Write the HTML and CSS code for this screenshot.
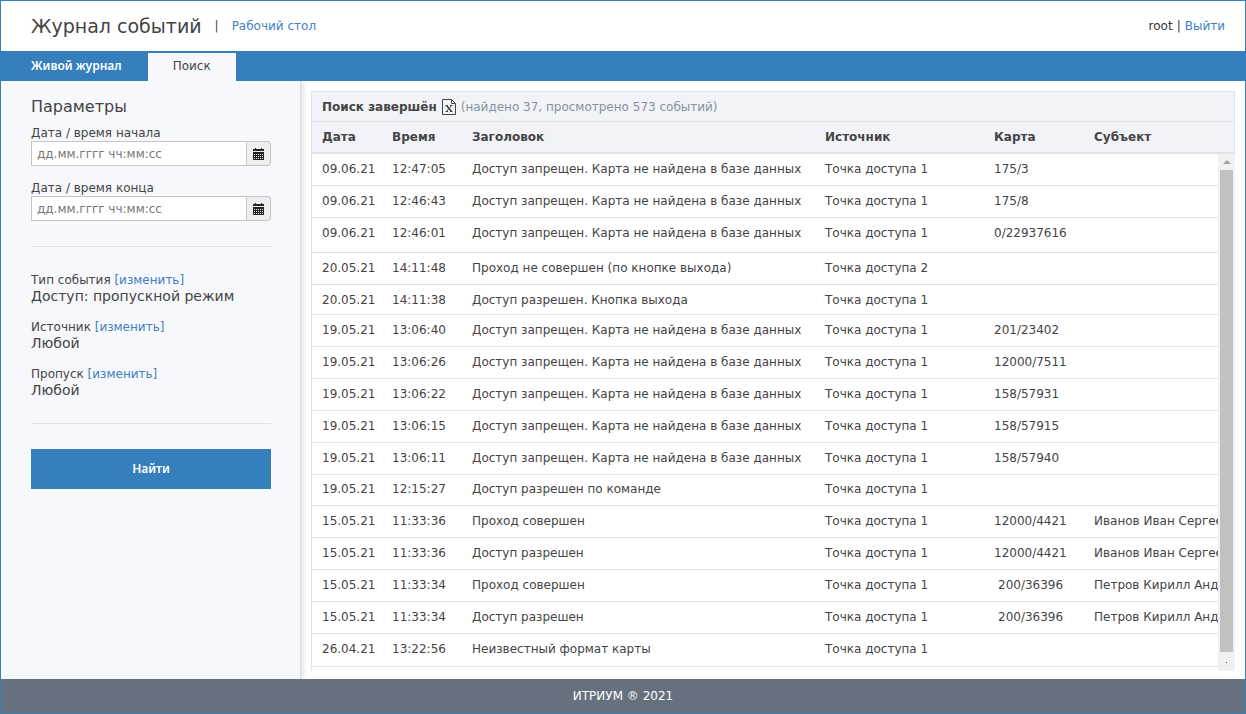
FILE: index.html
```html
<!DOCTYPE html>
<html lang="ru">
<head>
<meta charset="utf-8">
<title>Журнал событий</title>
<link rel="stylesheet" href="styles.css">
</head>
<body>
<div class="app">
  <header class="header">
    <h1 class="title">Журнал событий</h1>
    <span class="divider">|</span>
    <a class="link" href="#">Рабочий стол</a>
    <div class="user"><span>root</span><span>|</span><a class="link" href="#">Выйти</a></div>
  </header>
  <nav class="tabs">
    <a class="tab" href="#">Живой журнал</a>
    <a class="tab tab-active" href="#">Поиск</a>
  </nav>
  <div class="body">
    <aside class="sidebar">
      <h2 class="params">Параметры</h2>
      <div class="field">
        <label for="from">Дата / время начала</label>
        <div class="picker">
          <input id="from" type="text" placeholder="дд.мм.гггг чч:мм:сс">
          <button type="button" aria-label="Выбрать начало"><svg width="11" height="12" viewBox="0 0 11 12" shape-rendering="crispEdges"><path fill="#222" d="M0 1h2V0h1v1h5V0h1v1h2v2H0zM0 4h11v8H0z"/><path stroke="#eee" stroke-dasharray="1 1" d="M1 6.500h9M1 8.500h9M1 10.500h9"/></svg></button>
        </div>
      </div>
      <div class="field">
        <label for="to">Дата / время конца</label>
        <div class="picker">
          <input id="to" type="text" placeholder="дд.мм.гггг чч:мм:сс">
          <button type="button" aria-label="Выбрать конец"><svg width="11" height="12" viewBox="0 0 11 12" shape-rendering="crispEdges"><path fill="#222" d="M0 1h2V0h1v1h5V0h1v1h2v2H0zM0 4h11v8H0z"/><path stroke="#eee" stroke-dasharray="1 1" d="M1 6.500h9M1 8.500h9M1 10.500h9"/></svg></button>
        </div>
      </div>
      <div class="filters">
        <div class="filter"><div>Тип события <a class="link" href="#">[изменить]</a></div><div class="value">Доступ: пропускной режим</div></div>
        <div class="filter"><div>Источник <a class="link" href="#">[изменить]</a></div><div class="value">Любой</div></div>
        <div class="filter"><div>Пропуск <a class="link" href="#">[изменить]</a></div><div class="value">Любой</div></div>
      </div>
      <button class="find" type="button">Найти</button>
    </aside>
    <main class="results">
      <div class="status">
        <strong>Поиск завершён</strong>
        <svg width="14" height="16" viewBox="0 0 14 16" fill="none" stroke="#444" aria-label="Excel"><path d="M.5.500h9l4 4v11H.5z"/><path d="M9.500.500v4h4"/><path d="M3.500 6.500H6M8 6.500h2.500M3.500 12.500H6M8 12.500h2.500M9.500 6.500l-5 6"/><path stroke-width="1.500" d="M4.500 6.500l5 6"/></svg>
        <span class="muted">(найдено 37, просмотрено 573 событий)</span>
      </div>
      <div class="frame">
      <table class="events">
        <colgroup><col class="c-date"><col class="c-time"><col class="c-title"><col class="c-source"><col class="c-card"><col></colgroup>
        <thead><tr><th>Дата</th><th>Время</th><th>Заголовок</th><th>Источник</th><th>Карта</th><th>Субъект</th></tr></thead>
        <tbody>
          <tr><td>09.06.21</td><td>12:47:05</td><td>Доступ запрещен. Карта не найдена в базе данных</td><td>Точка доступа 1</td><td>175/3</td><td></td></tr>
          <tr><td>09.06.21</td><td>12:46:43</td><td>Доступ запрещен. Карта не найдена в базе данных</td><td>Точка доступа 1</td><td>175/8</td><td></td></tr>
          <tr class="tall"><td>09.06.21</td><td>12:46:01</td><td>Доступ запрещен. Карта не найдена в базе данных</td><td>Точка доступа 1</td><td>0/22937616</td><td></td></tr>
          <tr><td>20.05.21</td><td>14:11:48</td><td>Проход не совершен (по кнопке выхода)</td><td>Точка доступа 2</td><td></td><td></td></tr>
          <tr class="short"><td>20.05.21</td><td>14:11:38</td><td>Доступ разрешен. Кнопка выхода</td><td>Точка доступа 1</td><td></td><td></td></tr>
          <tr><td>19.05.21</td><td>13:06:40</td><td>Доступ запрещен. Карта не найдена в базе данных</td><td>Точка доступа 1</td><td>201/23402</td><td></td></tr>
          <tr><td>19.05.21</td><td>13:06:26</td><td>Доступ запрещен. Карта не найдена в базе данных</td><td>Точка доступа 1</td><td>12000/7511</td><td></td></tr>
          <tr><td>19.05.21</td><td>13:06:22</td><td>Доступ запрещен. Карта не найдена в базе данных</td><td>Точка доступа 1</td><td>158/57931</td><td></td></tr>
          <tr><td>19.05.21</td><td>13:06:15</td><td>Доступ запрещен. Карта не найдена в базе данных</td><td>Точка доступа 1</td><td>158/57915</td><td></td></tr>
          <tr><td>19.05.21</td><td>13:06:11</td><td>Доступ запрещен. Карта не найдена в базе данных</td><td>Точка доступа 1</td><td>158/57940</td><td></td></tr>
          <tr class="snug"><td>19.05.21</td><td>12:15:27</td><td>Доступ разрешен по команде</td><td>Точка доступа 1</td><td></td><td></td></tr>
          <tr><td>15.05.21</td><td>11:33:36</td><td>Проход совершен</td><td>Точка доступа 1</td><td>12000/4421</td><td>Иванов Иван Сергеевич</td></tr>
          <tr><td>15.05.21</td><td>11:33:36</td><td>Доступ разрешен</td><td>Точка доступа 1</td><td>12000/4421</td><td>Иванов Иван Сергеевич</td></tr>
          <tr><td>15.05.21</td><td>11:33:34</td><td>Проход совершен</td><td>Точка доступа 1</td><td class="inset">200/36396</td><td>Петров Кирилл Андреевич</td></tr>
          <tr><td>15.05.21</td><td>11:33:34</td><td>Доступ разрешен</td><td>Точка доступа 1</td><td class="inset">200/36396</td><td>Петров Кирилл Андреевич</td></tr>
          <tr class="last"><td>26.04.21</td><td>13:22:56</td><td>Неизвестный формат карты</td><td>Точка доступа 1</td><td></td><td></td></tr>
        </tbody>
      </table>
      <div class="scrollbar"><span class="arrow"></span><span class="thumb"></span><span class="dot"></span></div>
      </div>
    </main>
  </div>
  <footer class="footer">ИТРИУМ ® 2021</footer>
</div>
</body>
</html>
```
FILE: styles.css
```css
* { box-sizing: border-box; }
body { margin: 0; font: 12px/16px "DejaVu Sans", sans-serif; color: #444; }
.app { min-height: 100vh; display: flex; flex-direction: column; border: 1px solid #347fbc; background: #fff; }
.link { color: #427fc0; text-decoration: none; }
.header { display: flex; align-items: center; gap: 13px; height: 50px; padding: 0 20px 0 30px; }
.title { margin: 0; font-size: 19px; line-height: 24px; font-weight: 400; }
.user { display: flex; gap: 4px; margin-left: auto; color: #333; }
.tabs { display: flex; height: 30px; padding-top: 2px; background: #347fbc; }
.tab { padding: 5px 26px 0 30px; font: 600 12px/16px "Noto Sans", sans-serif; color: #fff; text-decoration: none; }
.tab-active { padding: 5px 25px 0; background: #f7f8fc; color: #444; font: 12px/16px "DejaVu Sans", sans-serif; }
.body { flex: 1; display: flex; overflow: hidden; }
.sidebar { flex: none; width: 300px; padding: 16px 29px 15px 30px; background: #f7f8fc; border-right: 1px solid #dcdee3; box-shadow: 2px 0 5px #ddd; }
.params { margin: 0 0 8px; font-size: 16px; line-height: 20px; font-weight: 400; }
.field { margin-bottom: 14px; }
.field label { display: block; }
.picker { display: flex; height: 25px; }
.picker input { flex: 1; min-width: 0; padding: 0 5px; border: 1px solid #c5c5c5; font: inherit; background: #fff; }
.picker input::placeholder { color: #777; opacity: 1; }
.picker button { width: 24px; padding: 0; display: flex; align-items: center; justify-content: center; border: 1px solid #c5c5c5; border-left: 0; border-radius: 0 4px 4px 0; background: #eee; }
.filters { margin: 25px 0; padding: 25px 0 24px; border: solid #dfe1e5; border-width: 1px 0; display: grid; gap: 14px; }
.value { font-size: 14px; line-height: 17px; }
.find { width: 100%; height: 40px; border: 0; background: #347fbc; color: #fff; font: 600 12px/16px "Noto Sans", sans-serif; }
.results { flex: 1; min-width: 0; padding: 10px 10px 8px; }
.status { display: flex; align-items: center; gap: 5px; height: 31px; padding: 0 10px; background: #f2f3f8; border: 1px solid #dfe1e5; }
.muted { color: #85929e; }
.frame { position: relative; padding-bottom: 4px; border-left: 1px solid #dfe1e5; }
.events { width: 100%; table-layout: fixed; border-collapse: separate; border-spacing: 0; }
.c-date { width: 70px; } .c-time { width: 80px; } .c-title { width: 353px; } .c-source { width: 169px; } .c-card { width: 100px; }
.events th { height: 32px; padding: 0 10px; text-align: left; background: #f2f3f8; border-bottom: 2px solid #dfe1e5; }
.events th:last-child { border-right: 1px solid #dfe1e5; }
.events td { height: 32px; padding: 7px 0 0 10px; vertical-align: top; border-bottom: 1px solid #dfe1e5; white-space: nowrap; overflow: hidden; }
.events .tall td { height: 35px; }
.events .short td { height: 30px; }
.events .snug td { height: 31px; padding-top: 6px; }
.events .last td { height: 33px; }
.events .inset { padding-left: 14px; }
.scrollbar { position: absolute; top: 32px; right: 0; bottom: 0; width: 17px; display: flex; flex-direction: column; align-items: center; background: #f1f1f1; }
.arrow { margin: 6px 0; border: 4px solid transparent; border-top: 0; border-bottom-color: #a3a3a3; }
.thumb { flex: 1; width: 13px; background: #c1c1c1; }
.dot { width: 1px; height: 1px; margin: 10px 0 8px; background: #505050; }
.footer { height: 34px; background: #65717d; color: #fff; text-align: center; line-height: 34px; }
```
